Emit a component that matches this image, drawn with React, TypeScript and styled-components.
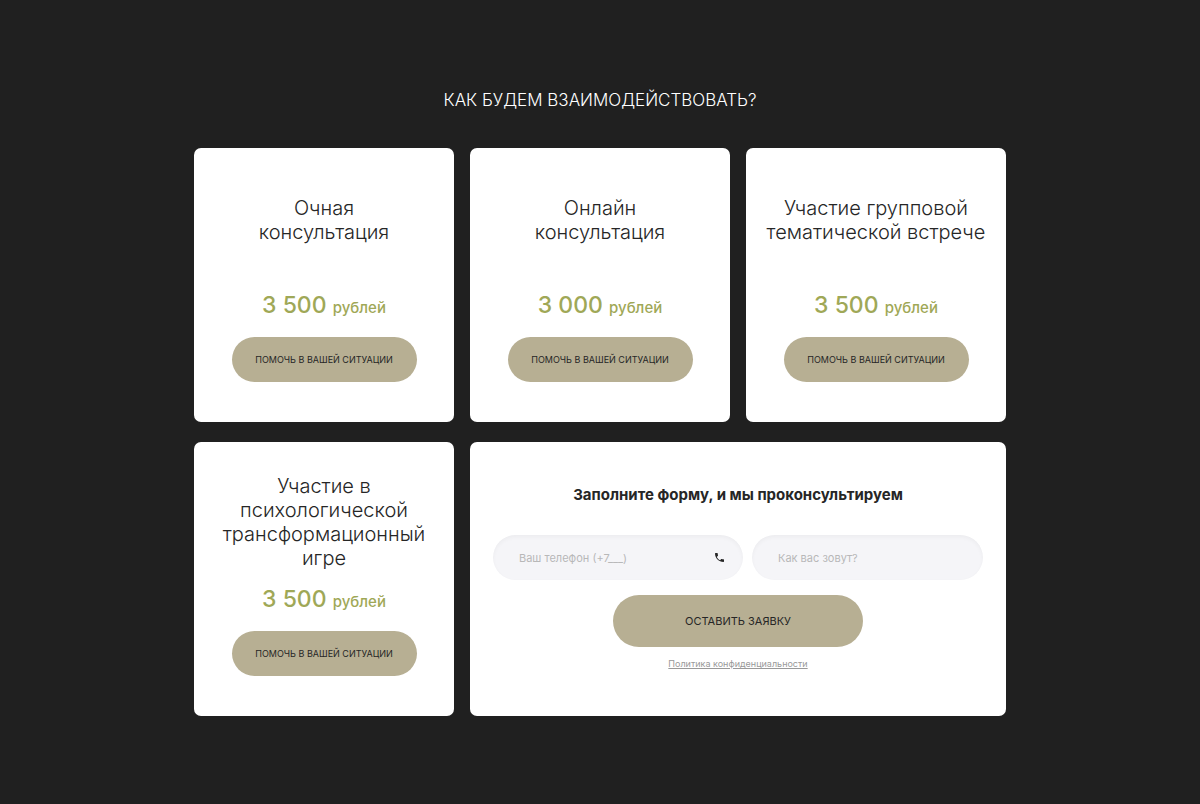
import React from "react";
import styled, { createGlobalStyle } from "styled-components";

const GlobalStyle = createGlobalStyle`
  * { box-sizing: border-box; }
  body {
    margin: 0;
    background: #202020;
    color: #262626;
    font-family: Inter, "Open Sans", sans-serif;
  }
`;

const Section = styled.section`
  max-width: 844px;
  margin: 0 auto;
  padding: 88px 16px;
`;

const Heading = styled.h1`
  margin: 0 0 36px;
  color: #fff;
  font-size: 17px;
  font-weight: 300;
  line-height: 24px;
  text-align: center;
  text-transform: uppercase;
`;

const Grid = styled.div`
  display: grid;
  grid-template-columns: repeat(3, minmax(0, 1fr));
  grid-auto-rows: minmax(274px, auto);
  gap: 20px 16px;

  @media (max-width: 760px) {
    grid-template-columns: minmax(0, 1fr);
  }
`;

const Card = styled.article<{ $tall?: boolean }>`
  display: flex;
  flex-direction: column;
  align-items: center;
  padding: ${(p) => (p.$tall ? 32 : 48)}px 8px 40px;
  border-radius: 7px;
  background: #fff;
  text-align: center;
`;

const CardTitle = styled.h2`
  margin: 0;
  font-size: 20px;
  font-weight: 300;
  line-height: 24px;
  white-space: pre-line;
`;

const Price = styled.p`
  margin: auto 0 13px;
  color: #9fa857;
  font-size: 23px;
  font-weight: 500;
  line-height: 32px;
`;

const Currency = styled.span`
  font-size: 15px;
`;

const Button = styled.button<{ $large?: boolean }>`
  width: ${(p) => (p.$large ? 250 : 185)}px;
  height: ${(p) => (p.$large ? 52 : 45)}px;
  padding: 0;
  border: 0;
  border-radius: 26px;
  background: #b7af93;
  color: #262626;
  font-family: inherit;
  font-size: ${(p) => (p.$large ? 11 : 9)}px;
  font-weight: 400;
  text-transform: uppercase;
  cursor: pointer;
`;

const FormCard = styled.form`
  grid-column: 2 / -1;
  display: flex;
  flex-direction: column;
  align-items: center;
  padding: 40px 23px;
  border-radius: 7px;
  background: #fff;

  @media (max-width: 760px) {
    grid-column: auto;
  }
`;

const FormTitle = styled.h2`
  margin: 0 0 28px;
  font-size: 15px;
  font-weight: 700;
  line-height: 25px;
  text-align: center;
`;

const Fields = styled.div`
  display: grid;
  grid-template-columns: 250fr 231fr;
  gap: 9px;
  width: 100%;
  margin-bottom: 15px;
`;

const Field = styled.label`
  display: flex;
  align-items: center;
  height: 45px;
  padding: 0 19px 0 26px;
  border-radius: 23px;
  background: #f5f5f8;
  box-shadow: inset 0 2px 4px rgba(0, 0, 0, 0.04);
`;

const Input = styled.input`
  flex: 1;
  min-width: 0;
  padding: 0;
  border: 0;
  outline: 0;
  background: transparent;
  color: #262626;
  font-family: inherit;
  font-size: 11px;

  &::placeholder {
    color: #b8b8b8;
    opacity: 1;
  }
`;

const Policy = styled.a`
  margin-top: 10px;
  color: #999;
  font-size: 9px;
  font-weight: 400;
  line-height: 14px;
`;

const PhoneIcon = () => (
  <svg width="9" height="9" viewBox="3 3 18 18" fill="#262626" aria-hidden="true">
    <path d="M6.62 10.79c1.44 2.83 3.76 5.14 6.59 6.59l2.2-2.2c.27-.27.67-.36 1.02-.24 1.12.37 2.33.57 3.57.57.55 0 1 .45 1 1V20c0 .55-.45 1-1 1-9.39 0-17-7.61-17-17 0-.55.45-1 1-1h3.5c.55 0 1 .45 1 1 0 1.25.2 2.45.57 3.57.11.35.03.74-.25 1.02l-2.2 2.2z" />
  </svg>
);

const services = [
  { title: "Очная\nконсультация", price: "3 500" },
  { title: "Онлайн\nконсультация", price: "3 000" },
  { title: "Участие групповой\nтематической встрече", price: "3 500" },
  { title: "Участие в\nпсихологической\nтрансформационный\nигре", price: "3 500", tall: true },
];

export default function App() {
  return (
    <>
      <GlobalStyle />
      <Section>
        <Heading>Как будем взаимодействовать?</Heading>
        <Grid>
          {services.map((s) => (
            <Card key={s.title} $tall={s.tall}>
              <CardTitle>{s.title}</CardTitle>
              <Price>
                {s.price} <Currency>рублей</Currency>
              </Price>
              <Button type="button">Помочь в вашей ситуации</Button>
            </Card>
          ))}
          <FormCard onSubmit={(e) => e.preventDefault()}>
            <FormTitle>Заполните форму, и мы проконсультируем</FormTitle>
            <Fields>
              <Field>
                <Input type="tel" aria-label="Ваш телефон" placeholder="Ваш телефон (+7___)" />
                <PhoneIcon />
              </Field>
              <Field>
                <Input type="text" aria-label="Как вас зовут?" placeholder="Как вас зовут?" />
              </Field>
            </Fields>
            <Button type="submit" $large>Оставить заявку</Button>
            <Policy href="#policy">Политика конфиденциальности</Policy>
          </FormCard>
        </Grid>
      </Section>
    </>
  );
}
